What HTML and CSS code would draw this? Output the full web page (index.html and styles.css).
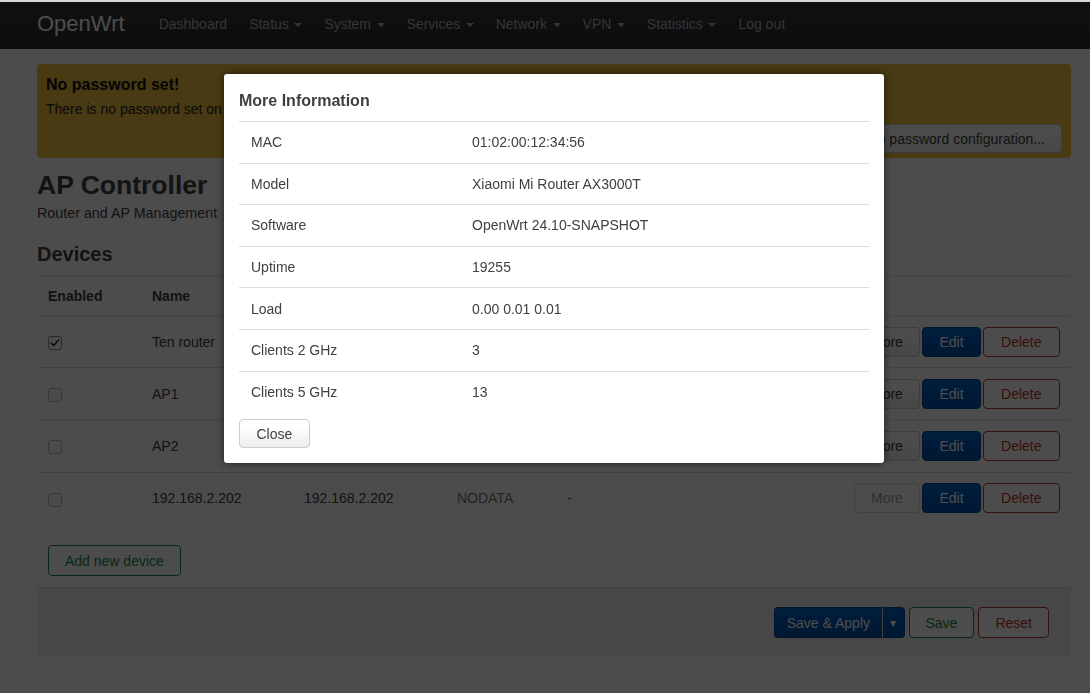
FILE: index.html
```html
<!DOCTYPE html>
<html lang="en">
<head>
<meta charset="utf-8">
<title>AP Controller - OpenWrt</title>
<link rel="stylesheet" href="styles.css">
</head>
<body>
<header class="topbar">
  <a class="brand" href="#">OpenWrt</a>
  <ul class="nav">
    <li><a href="#">Dashboard</a></li>
    <li><a href="#">Status<span class="caret"></span></a></li>
    <li><a href="#">System<span class="caret"></span></a></li>
    <li><a href="#">Services<span class="caret"></span></a></li>
    <li><a href="#">Network<span class="caret"></span></a></li>
    <li><a href="#">VPN<span class="caret"></span></a></li>
    <li><a href="#">Statistics<span class="caret"></span></a></li>
    <li><a href="#">Log out</a></li>
  </ul>
</header>

<main class="container">
  <div class="alert-message warning">
    <h4>No password set!</h4>
    <p>There is no password set on</p>
    <div class="alert-actions"><button class="btn btn-sm">Go to password configuration...</button></div>
  </div>

  <h2 class="page-title">AP Controller</h2>
  <div class="page-desc">Router and AP Management</div>

  <h3 class="section-title">Devices</h3>
  <table class="devices">
    <thead>
      <tr>
        <th class="c-en">Enabled</th>
        <th class="c-name">Name</th>
        <th class="c-host"></th>
        <th class="c-status"></th>
        <th class="c-clients"></th>
        <th class="c-actions"></th>
      </tr>
    </thead>
    <tbody>
      <tr>
        <td><span class="cb checked"><svg viewBox="0 0 14 14" width="12" height="12"><path d="M2.5 7.2 L5.6 10 L11.2 3.6" fill="none" stroke="#333" stroke-width="1.8" stroke-linecap="round" stroke-linejoin="round"/></svg></span></td>
        <td>Ten router</td>
        <td></td>
        <td></td>
        <td></td>
        <td class="c-actions"><div class="row-btns"><button class="btn more">More</button><button class="btn edit">Edit</button><button class="btn delete">Delete</button></div></td>
      </tr>
      <tr>
        <td><span class="cb"></span></td>
        <td>AP1</td>
        <td></td>
        <td></td>
        <td></td>
        <td class="c-actions"><div class="row-btns"><button class="btn more">More</button><button class="btn edit">Edit</button><button class="btn delete">Delete</button></div></td>
      </tr>
      <tr>
        <td><span class="cb"></span></td>
        <td>AP2</td>
        <td></td>
        <td></td>
        <td></td>
        <td class="c-actions"><div class="row-btns"><button class="btn more">More</button><button class="btn edit">Edit</button><button class="btn delete">Delete</button></div></td>
      </tr>
      <tr>
        <td><span class="cb"></span></td>
        <td>192.168.2.202</td>
        <td>192.168.2.202</td>
        <td class="muted">NODATA</td>
        <td>-</td>
        <td class="c-actions"><div class="row-btns"><button class="btn more disabled">More</button><button class="btn edit">Edit</button><button class="btn delete">Delete</button></div></td>
      </tr>
    </tbody>
  </table>

  <div class="table-footer">
    <button class="btn add">Add new device</button>
  </div>

  <div class="page-actions">
    <div class="split">
      <button class="btn apply main">Save &amp; Apply</button><button class="btn apply toggle">&#9662;</button>
    </div>
    <button class="btn save">Save</button>
    <button class="btn reset">Reset</button>
  </div>
</main>

<div class="overlay"></div>

<div class="modal">
  <h4 class="modal-title">More Information</h4>
  <div class="info">
    <div class="info-row"><span>MAC</span><span>01:02:00:12:34:56</span></div>
    <div class="info-row"><span>Model</span><span>Xiaomi Mi Router AX3000T</span></div>
    <div class="info-row"><span>Software</span><span>OpenWrt 24.10-SNAPSHOT</span></div>
    <div class="info-row"><span>Uptime</span><span>19255</span></div>
    <div class="info-row"><span>Load</span><span>0.00 0.01 0.01</span></div>
    <div class="info-row"><span>Clients 2 GHz</span><span>3</span></div>
    <div class="info-row"><span>Clients 5 GHz</span><span>13</span></div>
  </div>
  <div class="modal-actions"><button class="btn btn-sm close">Close</button></div>
</div>
</body>
</html>
```

FILE: styles.css
```css
* {
  box-sizing: border-box;
}

html, body {
  margin: 0;
  padding: 0;
}

body {
  font-family: "Liberation Sans", Arial, Helvetica, sans-serif;
  font-size: 14px;
  line-height: 20px;
  color: #404040;
  background: #fff;
  border-top: 2px solid #d6d6d6;
  min-height: 693px;
}

/* ---------- top bar ---------- */
.topbar {
  height: 47px;
  display: flex;
  align-items: center;
  padding-left: 37px;
  background: linear-gradient(#363636, #2c2c2c);
}

.brand {
  font-size: 22px;
  line-height: 26px;
  color: #fff;
  text-decoration: none;
  padding-right: 23px;
  padding-bottom: 3px;
}

.nav {
  display: flex;
  list-style: none;
  margin: 0;
  padding: 0;
}

.nav a {
  display: block;
  padding: 0 11px;
  line-height: 45px;
  padding-bottom: 2px;
  color: #b0b0b0;
  text-decoration: none;
}

.caret {
  display: inline-block;
  width: 0;
  height: 0;
  margin-left: 5.5px;
  vertical-align: middle;
  border-top: 4px solid currentColor;
  border-left: 4px solid transparent;
  border-right: 4px solid transparent;
}

/* ---------- content ---------- */
.container {
  padding: 15px 19px 0 37px;
}

.alert-message.warning {
  background: #f2c43c;
  border-radius: 4px;
  padding: 10px 9px 5px;
  color: #222;
}

.alert-message h4 {
  margin: 0 0 3px;
  font-size: 16px;
  line-height: 22px;
  font-weight: bold;
  color: #111;
}

.alert-message p {
  margin: 0;
}

.alert-actions {
  margin-top: 5px;
  text-align: right;
}

.page-title {
  margin: 12px 0 0;
  font-size: 26.5px;
  line-height: 30px;
  color: #404040;
}

.page-desc {
  margin-top: 3px;
  font-size: 14.3px;
}

.section-title {
  margin: 18px 0 0;
  font-size: 20px;
  line-height: 26px;
  color: #404040;
}

/* ---------- devices table ---------- */
.devices {
  width: 100%;
  margin-top: 8px;
  table-layout: fixed;
  border-collapse: separate;
  border-spacing: 0;
}

.devices th,
.devices td {
  text-align: left;
  vertical-align: middle;
  border-top: 1px solid #ddd;
  padding: 0 11px;
}

.devices th {
  height: 40px;
  font-weight: bold;
}

.devices td {
  height: 52.25px;
}

.c-en { width: 104px; }
.c-name { width: 152px; }
.c-host { width: 153px; }
.c-status { width: 110px; }
.c-actions { width: 223px; }

.devices td.c-actions {
  padding-right: 11.5px;
}

.muted {
  color: #777;
}

.cb {
  display: inline-flex;
  align-items: center;
  justify-content: center;
  width: 14px;
  height: 14px;
  border: 1px solid #bbb;
  border-radius: 3px;
  background: #fafafa;
  vertical-align: middle;
}

.cb.checked {
  border-color: #8a8a8a;
  background: #fff;
}

.row-btns {
  display: flex;
  justify-content: flex-end;
  gap: 2.5px;
}

/* ---------- buttons ---------- */
.btn {
  font-family: inherit;
  font-size: 14px;
  height: 30px;
  padding: 0 16px;
  border: 1px solid #ccc;
  border-radius: 4px;
  color: #404040;
  background: linear-gradient(#fff, #fff 25%, #ececec);
  cursor: pointer;
  white-space: nowrap;
}

.btn-sm {
  height: 29px;
}

.btn.more {
  padding: 0 16px;
}

.btn.disabled {
  color: #a0a0a0;
  border-color: #ddd;
  background: #fff;
}

.btn.edit,
.btn.apply {
  color: #fff;
  border-color: #00438e;
  background: linear-gradient(#0064cc, #0050a8);
}

.btn.edit {
  padding: 0 16px;
}

.btn.delete {
  padding: 0 17px;
}

.btn.delete,
.btn.reset {
  color: #bf3328;
  border-color: #bf3328;
  background: #fff;
}

.btn.add,
.btn.save {
  color: #168a48;
  border-color: #168a48;
  background: #fff;
}

.table-footer {
  padding: 21px 11px 0;
}

.btn.add {
  height: 31px;
}

.page-actions {
  margin-top: 11px;
  border-top: 1px solid #ddd;
  background: #eee;
  padding: 19px 22px 19px;
  display: flex;
  justify-content: flex-end;
  gap: 4px;
}

.page-actions .btn {
  height: 31px;
}

.btn.reset,
.btn.save {
  padding: 0 16px;
}

.split {
  display: flex;
}

.btn.apply.main {
  padding: 0 11.5px;
  border-radius: 4px 0 0 4px;
  border-right: 1px solid #d8d8d8;
}

.btn.apply.toggle {
  padding: 0 7.5px;
  border-left: 0;
  border-radius: 0 4px 4px 0;
  font-size: 12px;
}

/* ---------- modal ---------- */
.overlay {
  position: fixed;
  left: 0;
  right: 0;
  top: 2px;
  bottom: 0;
  background: rgba(0, 0, 0, 0.7);
}

.modal {
  position: fixed;
  left: 224px;
  top: 74px;
  width: 660px;
  padding: 15px 15px 15px;
  background: #fff;
  border-radius: 3px;
  box-shadow: 0 0 8px rgba(0, 0, 0, 0.6);
}

.modal-title {
  margin: 0 0 10px;
  font-size: 16px;
  line-height: 21px;
  padding-top: 1px;
  font-weight: bold;
  color: #404040;
}

.info-row {
  display: grid;
  grid-template-columns: 210px 1fr;
  align-items: center;
  height: 41.6px;
  padding-left: 12px;
  border-top: 1px solid #ddd;
}

.info-row span:last-child {
  padding-left: 11px;
}

.modal-actions {
  margin-top: 7px;
}

.btn.close {
  padding: 0 16.5px;
}
```
